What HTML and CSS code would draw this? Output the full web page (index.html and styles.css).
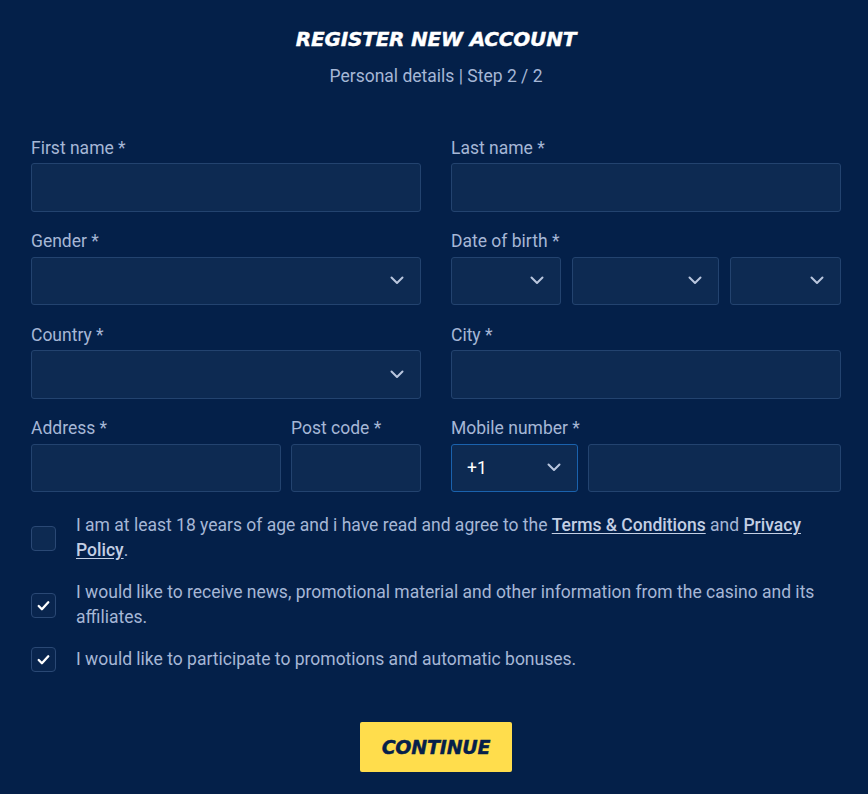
FILE: index.html
```html
<!DOCTYPE html>
<html lang="en">
<head>
<meta charset="utf-8">
<title>Register new account</title>
<link rel="stylesheet" href="styles.css">
</head>
<body>
<main class="page">
  <header class="head">
    <h1 class="title">REGISTER NEW ACCOUNT</h1>
    <p class="sub">Personal details | Step 2 / 2</p>
  </header>

  <form class="form">
    <div class="grid">
      <div class="field">
        <label class="label">First name *</label>
        <div class="input"></div>
      </div>
      <div class="field">
        <label class="label">Last name *</label>
        <div class="input"></div>
      </div>

      <div class="field">
        <label class="label">Gender *</label>
        <div class="input select"><svg class="chev" viewBox="0 0 14 9"><path d="M1.5 1.5 7 7l5.5-5.5"/></svg></div>
      </div>
      <div class="field">
        <label class="label">Date of birth *</label>
        <div class="dob">
          <div class="input select d1"><svg class="chev" viewBox="0 0 14 9"><path d="M1.5 1.5 7 7l5.5-5.5"/></svg></div>
          <div class="input select d2"><svg class="chev" viewBox="0 0 14 9"><path d="M1.5 1.5 7 7l5.5-5.5"/></svg></div>
          <div class="input select d3"><svg class="chev" viewBox="0 0 14 9"><path d="M1.5 1.5 7 7l5.5-5.5"/></svg></div>
        </div>
      </div>

      <div class="field">
        <label class="label">Country *</label>
        <div class="input select"><svg class="chev" viewBox="0 0 14 9"><path d="M1.5 1.5 7 7l5.5-5.5"/></svg></div>
      </div>
      <div class="field">
        <label class="label">City *</label>
        <div class="input"></div>
      </div>

      <div class="pair addr">
        <div class="field">
          <label class="label">Address *</label>
          <div class="input"></div>
        </div>
        <div class="field">
          <label class="label">Post code *</label>
          <div class="input"></div>
        </div>
      </div>
      <div class="field">
        <label class="label">Mobile number *</label>
        <div class="pair phone">
          <div class="input select code"><span class="code-val">+1</span><svg class="chev" viewBox="0 0 14 9"><path d="M1.5 1.5 7 7l5.5-5.5"/></svg></div>
          <div class="input"></div>
        </div>
      </div>
    </div>

    <div class="checks">
      <div class="check">
        <span class="box"></span>
        <p class="ctext">I am at least 18 years of age and i have read and agree to the <a class="link">Terms &amp; Conditions</a> and <a class="link">Privacy Policy</a>.</p>
      </div>
      <div class="check">
        <span class="box on"><svg viewBox="0 0 16 16"><path d="M3.5 8.5l3 3 6-6.5"/></svg></span>
        <p class="ctext">I would like to receive news, promotional material and other information from the casino and its affiliates.</p>
      </div>
      <div class="check">
        <span class="box on"><svg viewBox="0 0 16 16"><path d="M3.5 8.5l3 3 6-6.5"/></svg></span>
        <p class="ctext">I would like to participate to promotions and automatic bonuses.</p>
      </div>
    </div>

    <div class="actions">
      <button type="button" class="btn">CONTINUE</button>
    </div>
  </form>
</main>
</body>
</html>
```

FILE: styles.css
```css
* { box-sizing: border-box; }
html, body { margin: 0; padding: 0; }
body {
  background: #042049;
  font-family: Roboto, "Liberation Sans", Arial, sans-serif;
  color: #a6b7d6;
}
.page {
  width: 810px;
  margin-left: 31px;
  padding-top: 27px;
}
.head { text-align: center; }
.title {
  margin: 0;
  font-family: "DejaVu Sans", "Open Sans", sans-serif;
  font-style: italic;
  font-weight: 700;
  font-size: 20px;
  line-height: 24px;
  color: #ffffff;
  letter-spacing: -0.2px;
  -webkit-text-stroke: 0.4px #ffffff;
}
.sub {
  margin: 15px 0 0;
  font-size: 17.5px;
  line-height: 20px;
  color: #a6b7d6;
}
.form { margin-top: 51.5px; }
.grid {
  display: grid;
  grid-template-columns: 390px 390px;
  column-gap: 30px;
  row-gap: 19.5px;
}
.field { display: flex; flex-direction: column; min-width: 0; }
.label {
  font-size: 17.5px;
  line-height: 20px;
  color: #a6b7d6;
  margin-bottom: 5.5px;
}
.input {
  height: 48.5px;
  background: #0d2a52;
  border: 1px solid #23436f;
  border-radius: 3px;
  display: flex;
  align-items: center;
}
.select { justify-content: flex-end; padding-right: 16px; }
.chev {
  width: 14px;
  height: 9px;
  fill: none;
  stroke: #b9c6de;
  stroke-width: 2;
  stroke-linecap: round;
  stroke-linejoin: round;
}
.dob { display: flex; gap: 11px; }
.d1 { flex: 0 0 110px; }
.d2 { flex: 0 0 147px; }
.d3 { flex: 1; }
.pair { display: flex; gap: 10px; }
.addr .field:first-child { flex: 0 0 250px; }
.addr .field:last-child { flex: 1; }
.phone .code { flex: 0 0 127px; justify-content: space-between; padding-left: 15px; border-color: #1a62ad; }
.phone .input:last-child { flex: 1; }
.code-val { color: #ffffff; font-size: 17.5px; }
.checks {
  margin-top: 21px;
  display: flex;
  flex-direction: column;
  gap: 17px;
}
.check { display: flex; align-items: center; gap: 20px; }
.box {
  flex: 0 0 25px;
  width: 25px;
  height: 25px;
  border: 1px solid #2a4874;
  background: #0d2a52;
  border-radius: 4px;
  display: flex;
  align-items: center;
  justify-content: center;
}
.box.on { background: #09254e; }
.box svg {
  width: 17px;
  height: 17px;
  fill: none;
  stroke: #ffffff;
  stroke-width: 2.2;
  stroke-linecap: round;
  stroke-linejoin: round;
}
.ctext {
  margin: 0;
  font-size: 17.5px;
  line-height: 25px;
  color: #a6b7d6;
}
.link {
  color: #c3cfe4;
  font-weight: 500;
  text-decoration: underline;
  text-underline-offset: 2px;
}
.actions {
  display: flex;
  justify-content: center;
  margin-top: 50px;
}
.btn {
  width: 152px;
  height: 50px;
  border: none;
  border-radius: 2px;
  background: #ffdd4c;
  color: #06204a;
  font-family: "DejaVu Sans", "Open Sans", sans-serif;
  font-style: italic;
  font-weight: 700;
  font-size: 19px;
  letter-spacing: -0.2px;
  -webkit-text-stroke: 0.4px #06204a;
}
```
